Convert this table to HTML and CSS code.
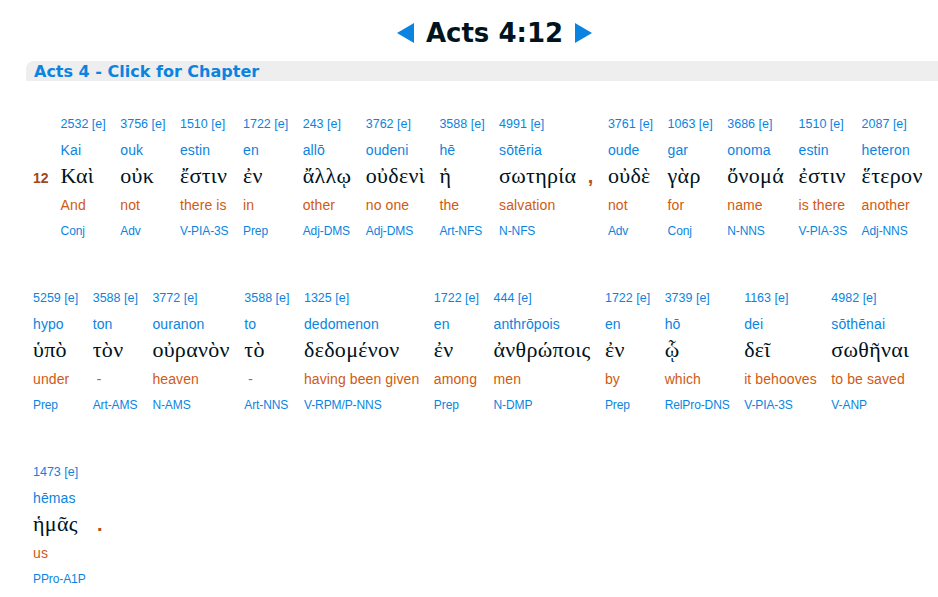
FILE: index.html
```html
<!DOCTYPE html>
<html lang="en">
<head>
  <meta charset="UTF-8" />
  <title>Acts 4:12 Interlinear</title>
  <link rel="stylesheet" href="styles.css">
</head>
<body>
  <div class="page">
    <h1 class="title">
      <a class="arrow" href="#"><svg width="17" height="20" viewBox="0 0 17 20"><polygon points="0,10 17,0 17,20" /></svg></a>
      <span>Acts 4:12</span>
      <a class="arrow" href="#"><svg width="17" height="20" viewBox="0 0 17 20"><polygon points="17,10 0,0 0,20" /></svg></a>
    </h1>

    <div class="chapter"><a href="#">Acts 4 - Click for Chapter</a></div>

    <div class="verse">
      <div class="vnum">12</div>

      <div class="word"><span class="num">2532 [e]</span><span class="tr">Kai</span><span class="gk">Καὶ</span><span class="en">And</span><span class="pos">Conj</span></div>
      <div class="word"><span class="num">3756 [e]</span><span class="tr">ouk</span><span class="gk">οὐκ</span><span class="en">not</span><span class="pos">Adv</span></div>
      <div class="word"><span class="num">1510 [e]</span><span class="tr">estin</span><span class="gk">ἔστιν</span><span class="en">there is</span><span class="pos">V-PIA-3S</span></div>
      <div class="word"><span class="num">1722 [e]</span><span class="tr">en</span><span class="gk">ἐν</span><span class="en">in</span><span class="pos">Prep</span></div>
      <div class="word"><span class="num">243 [e]</span><span class="tr">allō</span><span class="gk">ἄλλῳ</span><span class="en">other</span><span class="pos">Adj-DMS</span></div>
      <div class="word"><span class="num">3762 [e]</span><span class="tr">oudeni</span><span class="gk">οὐδενὶ</span><span class="en">no one</span><span class="pos">Adj-DMS</span></div>
      <div class="word"><span class="num">3588 [e]</span><span class="tr">hē</span><span class="gk">ἡ</span><span class="en">the</span><span class="pos">Art-NFS</span></div>
      <div class="word"><span class="num">4991 [e]</span><span class="tr">sōtēria</span><span class="gk">σωτηρία</span><span class="en">salvation</span><span class="pos">N-NFS</span></div>
      <div class="punct">,</div>
      <div class="word"><span class="num">3761 [e]</span><span class="tr">oude</span><span class="gk">οὐδὲ</span><span class="en">not</span><span class="pos">Adv</span></div>
      <div class="word"><span class="num">1063 [e]</span><span class="tr">gar</span><span class="gk">γὰρ</span><span class="en">for</span><span class="pos">Conj</span></div>
      <div class="word"><span class="num">3686 [e]</span><span class="tr">onoma</span><span class="gk">ὄνομά</span><span class="en">name</span><span class="pos">N-NNS</span></div>
      <div class="word"><span class="num">1510 [e]</span><span class="tr">estin</span><span class="gk">ἐστιν</span><span class="en">is there</span><span class="pos">V-PIA-3S</span></div>
      <div class="word"><span class="num">2087 [e]</span><span class="tr">heteron</span><span class="gk">ἕτερον</span><span class="en">another</span><span class="pos">Adj-NNS</span></div>

      <div class="word"><span class="num">5259 [e]</span><span class="tr">hypo</span><span class="gk">ὑπὸ</span><span class="en">under</span><span class="pos">Prep</span></div>
      <div class="word"><span class="num">3588 [e]</span><span class="tr">ton</span><span class="gk">τὸν</span><span class="en">&nbsp;-</span><span class="pos">Art-AMS</span></div>
      <div class="word"><span class="num">3772 [e]</span><span class="tr">ouranon</span><span class="gk">οὐρανὸν</span><span class="en">heaven</span><span class="pos">N-AMS</span></div>
      <div class="word"><span class="num">3588 [e]</span><span class="tr">to</span><span class="gk">τὸ</span><span class="en">&nbsp;-</span><span class="pos">Art-NNS</span></div>
      <div class="word"><span class="num">1325 [e]</span><span class="tr">dedomenon</span><span class="gk">δεδομένον</span><span class="en">having been given</span><span class="pos">V-RPM/P-NNS</span></div>
      <div class="word"><span class="num">1722 [e]</span><span class="tr">en</span><span class="gk">ἐν</span><span class="en">among</span><span class="pos">Prep</span></div>
      <div class="word"><span class="num">444 [e]</span><span class="tr">anthrōpois</span><span class="gk">ἀνθρώποις</span><span class="en">men</span><span class="pos">N-DMP</span></div>
      <div class="word"><span class="num">1722 [e]</span><span class="tr">en</span><span class="gk">ἐν</span><span class="en">by</span><span class="pos">Prep</span></div>
      <div class="word"><span class="num">3739 [e]</span><span class="tr">hō</span><span class="gk">ᾧ</span><span class="en">which</span><span class="pos">RelPro-DNS</span></div>
      <div class="word"><span class="num">1163 [e]</span><span class="tr">dei</span><span class="gk">δεῖ</span><span class="en">it behooves</span><span class="pos">V-PIA-3S</span></div>
      <div class="word"><span class="num">4982 [e]</span><span class="tr">sōthēnai</span><span class="gk">σωθῆναι</span><span class="en">to be saved</span><span class="pos">V-ANP</span></div>

      <div class="word"><span class="num">1473 [e]</span><span class="tr">hēmas</span><span class="gk">ἡμᾶς</span><span class="en">us</span><span class="pos">PPro-A1P</span></div>
      <div class="punct">.</div>
    </div>
  </div>
</body>
</html>
```

FILE: styles.css
```css
html, body {
  margin: 0;
  padding: 0;
  background: #fff;
  overflow: hidden;
}

.page {
  width: 937px;
  margin-left: 26px;
}

.title {
  display: flex;
  justify-content: center;
  align-items: center;
  gap: 12px;
  margin: 0;
  padding-top: 15px;
  height: 36px;
  font-family: "DejaVu Sans", Verdana, sans-serif;
  font-size: 26px;
  font-weight: bold;
  line-height: 36px;
  color: #001320;
}

.arrow {
  display: flex;
}

.arrow svg {
  fill: #0a84e0;
}

.chapter {
  margin-top: 10px;
  height: 19px;
  padding: 1px 0 0 8px;
  background: #eee;
  border-top-left-radius: 8px;
  font-family: "DejaVu Sans", Verdana, sans-serif;
  font-size: 16px;
  font-weight: bold;
  line-height: 19px;
}

.chapter a {
  color: #0a84e0;
  text-decoration: none;
}

.verse {
  display: flex;
  flex-wrap: wrap;
  column-gap: 14.5px;
  row-gap: 45px;
  padding: 30px 25px 0 7px;
  font-family: "Liberation Sans", Arial, sans-serif;
}

.word {
  display: flex;
  flex-direction: column;
  height: 129px;
  white-space: nowrap;
}

.num {
  font-size: 12.5px;
  line-height: 26px;
  color: #0a84e0;
}

.tr {
  font-size: 14px;
  letter-spacing: 0.1px;
  line-height: 27px;
  color: #0a84e0;
}

.gk {
  font-family: "Liberation Serif", "DejaVu Serif", serif;
  font-size: 22px;
  letter-spacing: 0.3px;
  line-height: 24px;
  color: #001320;
}

.en {
  font-size: 14px;
  letter-spacing: 0.1px;
  line-height: 35px;
  color: #cf5a12;
}

.pos {
  font-size: 12px;
  letter-spacing: -0.1px;
  line-height: 17px;
  color: #0a84e0;
}

.vnum {
  margin-right: -2.5px;
  padding-top: 55px;
  font-size: 14px;
  font-weight: bold;
  line-height: 24px;
  color: #a4461a;
}

.punct {
  margin-left: -3px;
  padding-top: 53px;
  font-size: 20px;
  font-weight: bold;
  line-height: 24px;
  color: #b5501a;
}
```
